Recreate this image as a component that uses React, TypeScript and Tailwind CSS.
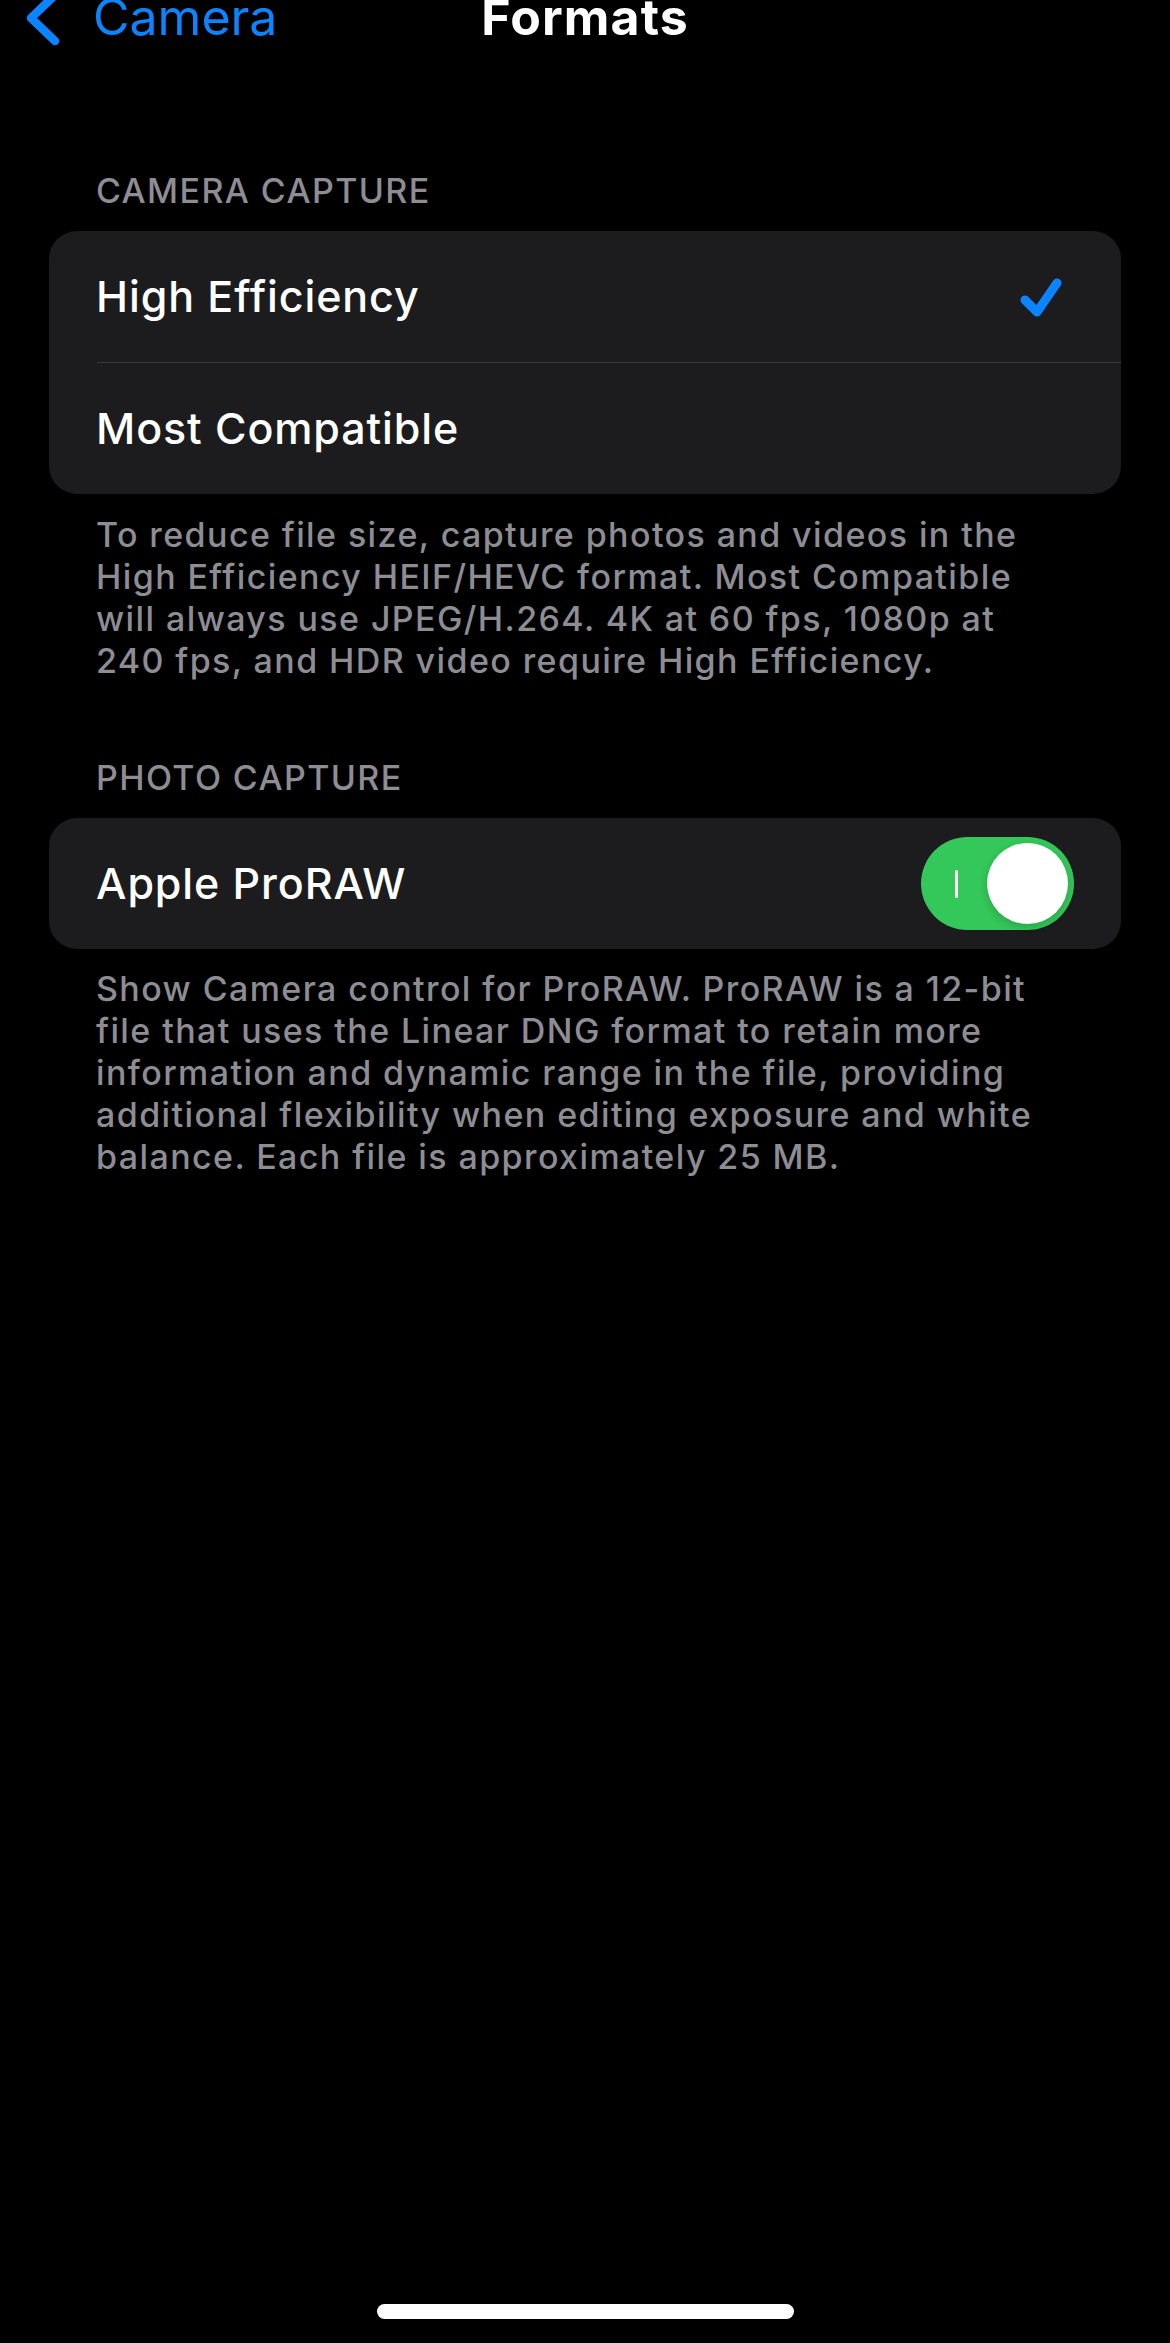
import React from "react";

function Chevron() {
  return (
    <svg width="50" height="80" viewBox="20 -20 50 80" className="ml-[20px] shrink-0">
      <path d="M55 -5 L31 18 L55 41" fill="none" stroke="#0a84ff" strokeWidth="8.5" strokeLinecap="round" strokeLinejoin="round" />
    </svg>
  );
}

function Check() {
  return (
    <svg width="50" height="50" viewBox="0 0 50 50" className="shrink-0">
      <path d="M9 28 L21 40 L41 11" fill="none" stroke="#0a84ff" strokeWidth="9" strokeLinecap="round" strokeLinejoin="round" />
    </svg>
  );
}

function Toggle() {
  return (
    <div className="w-[153px] h-[93px] rounded-full bg-[#34c759] flex items-center justify-between pl-[34px] pr-[6px] shrink-0">
      <div className="w-[3px] h-[28px] rounded-full bg-white" />
      <div className="w-[81px] h-[81px] rounded-full bg-white shadow-[0_3px_8px_rgba(0,0,0,0.18)]" />
    </div>
  );
}

export default function App() {
  return (
    <div className="w-[1170px] h-[2343px] bg-black overflow-hidden flex flex-col font-['Inter','Liberation_Sans',sans-serif] antialiased">
      {/* Nav bar */}
      <div className="-mt-[20px] h-[80px] grid grid-cols-[1fr_auto_1fr] items-start">
        <div className="flex items-start">
          <Chevron />
          <span className="ml-[23px] mt-[12px] text-[50px] leading-[50px] text-[#0a84ff]">Camera</span>
        </div>
        <div className="mt-[12px] text-[50px] leading-[50px] font-bold text-white tracking-[1.1px]">Formats</div>
        <div />
      </div>

      {/* Camera capture */}
      <div className="mt-[114px] pl-[96px] text-[34px] leading-[33px] font-medium tracking-[1.4px] text-[#8d8d93] uppercase">Camera Capture</div>
      <div className="mt-[24px] mx-[49px] bg-[#1c1c1e] rounded-[28px] overflow-hidden">
        <div className="h-[131px] flex items-center justify-between pl-[47px] pr-[55px]">
          <span className="text-[43px] leading-[43px] font-medium tracking-[0.9px] text-white">High Efficiency</span>
          <Check />
        </div>
        <div className="ml-[48px] h-px bg-[#38383a]" />
        <div className="h-[131px] flex items-center pl-[47px]">
          <span className="text-[43px] leading-[43px] font-medium tracking-[0.9px] text-white">Most Compatible</span>
        </div>
      </div>
      <p className="pt-[20px] pl-[96px] text-[34px] leading-[42px] font-medium tracking-[1.4px] text-[#8d8d93] whitespace-nowrap">
        To reduce file size, capture photos and videos in the
        <br />
        High Efficiency HEIF/HEVC format. Most Compatible
        <br />
        will always use JPEG/H.264. 4K at 60 fps, 1080p at
        <br />
        240 fps, and HDR video require High Efficiency.
      </p>

      {/* Photo capture */}
      <div className="mt-[79px] pl-[96px] text-[34px] leading-[33px] font-medium tracking-[1.4px] text-[#8d8d93] uppercase">Photo Capture</div>
      <div className="mt-[24px] mx-[49px] bg-[#1c1c1e] rounded-[28px]">
        <div className="h-[131px] flex items-center justify-between pl-[47px] pr-[47px]">
          <span className="text-[43px] leading-[43px] font-medium tracking-[0.9px] text-white">Apple ProRAW</span>
          <Toggle />
        </div>
      </div>
      <p className="pt-[19px] pl-[96px] text-[34px] leading-[42px] font-medium tracking-[1.4px] text-[#8d8d93] whitespace-nowrap">
        Show Camera control for ProRAW. ProRAW is a 12-bit
        <br />
        file that uses the Linear DNG format to retain more
        <br />
        information and dynamic range in the file, providing
        <br />
        additional flexibility when editing exposure and white
        <br />
        balance. Each file is approximately 25 MB.
      </p>

      {/* Home indicator */}
      <div className="mt-auto mb-[24px] flex justify-center">
        <div className="w-[417px] h-[15px] rounded-full bg-white" />
      </div>
    </div>
  );
}
